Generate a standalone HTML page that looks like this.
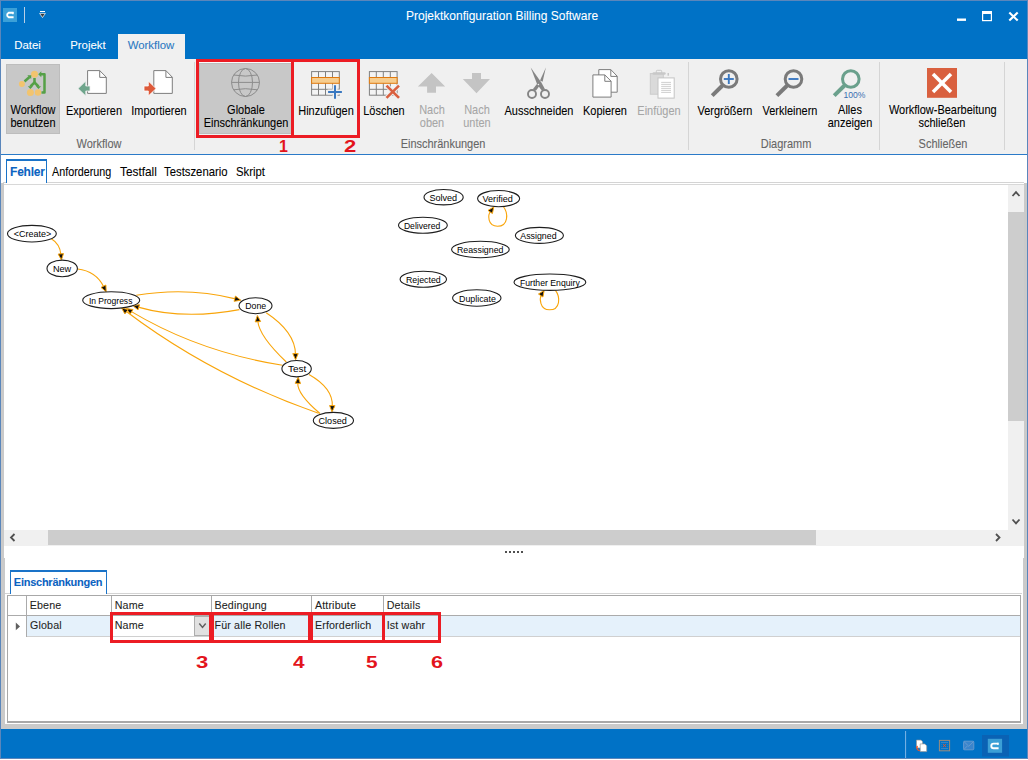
<!DOCTYPE html>
<html><head><meta charset="utf-8">
<style>
*{box-sizing:border-box;margin:0;padding:0}
html,body{width:1028px;height:760px;overflow:hidden;background:#fff;font-family:"Liberation Sans",sans-serif;}
.a{position:absolute}
.t{position:absolute;white-space:nowrap;font-size:11px;color:#000;line-height:12px;-webkit-text-stroke:0.08px currentColor}
.c{text-align:center}
.g{color:#a6a6a6}
.grp{position:absolute;font-size:12.4px;transform:scaleX(0.885);color:#666;-webkit-text-stroke:0.1px currentColor;white-space:nowrap;text-align:center;line-height:12px}
.sep{position:absolute;width:1px;background:#d5d5d5}
.red{position:absolute;border:3px solid #ec1c24}
.num{position:absolute;font-weight:bold;color:#e3141c;font-size:15px;line-height:15px}
</style></head><body>
<div class="a" style="left:0;top:0;width:1028px;height:759px;background:#0072c6;border:1px solid #5a86bb"></div>
<!-- title bar -->
<div class="a" style="left:3px;top:8px;width:14px;height:14px;background:#3ba0d8"></div>
<div class="a" style="left:24px;top:7px;width:1px;height:16px;background:#b9cfe6"></div>

<svg class="a" style="left:0;top:0" width="60" height="30">
<path d="M13.6,12.8 H8.6 A2.4,2.4 0 0 0 8.6,17.2 H13.6" stroke="#fff" stroke-width="1.9" fill="none"/>
<line x1="12.9" y1="12" x2="12.9" y2="14.2" stroke="#fff" stroke-width="1.3"/>
<rect x="40" y="11" width="5" height="1" fill="#fff"/>
<polygon points="39.6,13.4 45.4,13.4 42.5,17.6" fill="#3a3a3a" stroke="#fff" stroke-width="0.7"/>
</svg>
<svg class="a" style="left:950px;top:5px" width="78" height="24">
<rect x="7" y="13.5" width="9" height="2.4" fill="#fff"/>
<rect x="32.6" y="6.6" width="8.8" height="9" fill="none" stroke="#fff" stroke-width="1.2"/>
<rect x="32" y="6" width="10" height="3" fill="#fff"/>
<g stroke="#fff" stroke-width="2.1"><line x1="59.3" y1="7.5" x2="67.7" y2="15.6"/><line x1="67.7" y1="7.5" x2="59.3" y2="15.6"/></g>
</svg>
<div class="t" style="left:406px;top:9px;font-size:12px;color:#fff;line-height:14px">Projektkonfiguration Billing Software</div>
<!-- tabs -->
<div class="t" style="left:14.3px;top:38.5px;font-size:11.4px;color:#fff;line-height:13px">Datei</div>
<div class="t" style="left:70.2px;top:38.5px;font-size:11.4px;color:#fff;line-height:13px">Projekt</div>
<div class="a" style="left:118px;top:34px;width:67px;height:26px;background:#f0f0f0"></div>
<div class="t" style="left:127.7px;top:38.5px;font-size:11.4px;color:#2b79c2;line-height:13px">Workflow</div>
<!-- ribbon -->
<div class="a" style="left:1px;top:59px;width:1026px;height:95px;background:#f0f0f0"></div>
<div class="a" style="left:1px;top:154px;width:1026px;height:1px;background:#2a7ac8"></div>

<!-- ribbon buttons highlight -->
<div class="a" style="left:6px;top:64px;width:54px;height:70px;background:#c8c8c8;border:1px solid #bdbdbd"></div>
<div class="a" style="left:199px;top:63px;width:92px;height:71px;background:#c8c8c8;border:1px solid #bdbdbd;border-right:none"></div>
<div class="a" style="left:199px;top:62px;width:92px;height:1px;background:#fafafa"></div>
<!-- separators -->
<div class="sep" style="left:194px;top:62px;height:88px"></div>
<div class="sep" style="left:688px;top:62px;height:88px"></div>
<div class="sep" style="left:879px;top:62px;height:88px"></div>
<div class="sep" style="left:1004px;top:62px;height:88px"></div>
<!-- labels -->
<div class="t c" style="left:-27px;top:103.7px;width:120px;line-height:13px;font-size:12.4px;transform:scaleX(0.885)">Workflow<br>benutzen</div>
<div class="t c" style="left:34px;top:104.7px;width:120px;line-height:13px;font-size:12.4px;transform:scaleX(0.885)">Exportieren</div>
<div class="t c" style="left:99px;top:104.7px;width:120px;line-height:13px;font-size:12.4px;transform:scaleX(0.885)">Importieren</div>
<div class="grp" style="left:39px;top:137.5px;width:120px">Workflow</div>
<div class="t c" style="left:186px;top:103.7px;width:120px;line-height:13px;font-size:12.4px;transform:scaleX(0.885)">Globale<br>Einschränkungen</div>
<div class="t c" style="left:266px;top:104.7px;width:120px;line-height:13px;font-size:12.4px;transform:scaleX(0.885)">Hinzufügen</div>
<div class="t c" style="left:324px;top:104.7px;width:120px;line-height:13px;font-size:12.4px;transform:scaleX(0.885)">Löschen</div>
<div class="t c g" style="left:372px;top:103.7px;width:120px;line-height:13px;font-size:12.4px;transform:scaleX(0.885)">Nach<br>oben</div>
<div class="t c g" style="left:417px;top:103.7px;width:120px;line-height:13px;font-size:12.4px;transform:scaleX(0.885)">Nach<br>unten</div>
<div class="grp" style="left:383px;top:137.5px;width:120px">Einschränkungen</div>
<div class="t c" style="left:479px;top:104.7px;width:120px;line-height:13px;font-size:12.4px;transform:scaleX(0.885)">Ausschneiden</div>
<div class="t c" style="left:545px;top:104.7px;width:120px;line-height:13px;font-size:12.4px;transform:scaleX(0.885)">Kopieren</div>
<div class="t c g" style="left:599px;top:104.7px;width:120px;line-height:13px;font-size:12.4px;transform:scaleX(0.885)">Einfügen</div>
<div class="t c" style="left:665px;top:104.7px;width:120px;line-height:13px;font-size:12.4px;transform:scaleX(0.885)">Vergrößern</div>
<div class="t c" style="left:730px;top:104.7px;width:120px;line-height:13px;font-size:12.4px;transform:scaleX(0.885)">Verkleinern</div>
<div class="t c" style="left:790px;top:103.7px;width:120px;line-height:13px;font-size:12.4px;transform:scaleX(0.885)">Alles<br>anzeigen</div>
<div class="grp" style="left:726px;top:137.5px;width:120px">Diagramm</div>
<div class="t c" style="left:882px;top:103.7px;width:120px;line-height:13px;font-size:12.4px;transform:scaleX(0.885)">Workflow-Bearbeitung<br>schließen</div>
<div class="grp" style="left:883px;top:137.5px;width:120px">Schließen</div>

<svg class="a" style="left:0;top:0" width="1028" height="160" viewBox="0 0 1028 160">
<!-- workflow benutzen -->
<g fill="#f2c46e"><circle cx="34.5" cy="74.3" r="3.5"/><circle cx="21.9" cy="84" r="3"/><circle cx="30.4" cy="92.5" r="3.5"/><circle cx="38" cy="92.5" r="3.2"/></g>
<g stroke="#55a047" stroke-width="2.5" fill="none" stroke-linejoin="round">
<line x1="24.5" y1="81.5" x2="29.5" y2="77"/>
<line x1="34.5" y1="78" x2="34.5" y2="83"/>
<polyline points="30.4,86.5 34.5,82.5 38.5,86.5"/>
<polyline points="41,74.3 44.5,74.3 44.5,92.5 41.5,92.5"/>
</g>
<g fill="#55a047">
<polygon points="27.3,75.3 31.3,75.2 31.2,79"/>
<polygon points="27.8,86.2 33,86.2 30.4,89"/>
<polygon points="35.9,86.2 41.1,86.2 38.5,89"/>
<polygon points="38.2,74.3 41.3,71.3 41.3,77.3"/>
</g>
<!-- export -->
<g stroke="#7d7d7d" stroke-width="1" fill="#fff">
<path d="M87.6,70.6 H99.7 L106.3,77.2 V93.4 H87.6 Z"/>
<path d="M99.7,70.6 V77.4 H106.3" fill="none"/>
<path d="M153.8,70.6 H165.9 L172.3,77.2 V93.4 H153.8 Z"/>
<path d="M165.9,70.6 V77.4 H172.3" fill="none"/>
</g>
<polygon points="78,88.6 85.8,81 85.8,86 90,86 90,91 85.8,91 85.8,96" fill="#6fa58c" stroke="#f0f0f0" stroke-width="0.8"/>
<polygon points="156.1,88.6 148.3,81 148.3,86 144,86 144,91 148.3,91 148.3,96" fill="#dd5a3a" stroke="#fff" stroke-width="0.8"/>
<!-- globe -->
<g stroke="#8c8c8c" stroke-width="1" fill="none">
<circle cx="245.5" cy="82.5" r="14"/>
<ellipse cx="245.5" cy="82.5" rx="7" ry="14"/>
<line x1="231.5" y1="82.4" x2="259.5" y2="82.4"/>
<path d="M233.5,75 Q245.5,77.2 257.5,75"/>
<path d="M233.5,89.8 Q245.5,87.6 257.5,89.8"/>
</g>
<!-- table add -->
<g stroke="#808080" stroke-width="1" fill="#f4f4f4">
<rect x="311.6" y="71.6" width="27.7" height="23.6"/>
<line x1="318.5" y1="71.6" x2="318.5" y2="95.2"/><line x1="325.5" y1="71.6" x2="325.5" y2="95.2"/><line x1="332.5" y1="71.6" x2="332.5" y2="95.2"/>
<line x1="311.6" y1="89.3" x2="339.3" y2="89.3"/>
</g>
<rect x="311.6" y="77.5" width="27.7" height="5.8" fill="#f6cd8f" stroke="#e07a10" stroke-width="1"/>
<g stroke="#f0f0f0" stroke-width="5"><line x1="335" y1="84.5" x2="335" y2="99.5"/><line x1="327.5" y1="92" x2="342.5" y2="92"/></g>
<g stroke="#3a78c0" stroke-width="2"><line x1="335" y1="85.3" x2="335" y2="98.8"/><line x1="328.1" y1="92" x2="341.9" y2="92"/></g>
<!-- table delete -->
<g stroke="#808080" stroke-width="1" fill="#f4f4f4">
<rect x="369.4" y="71.6" width="27.7" height="23.6"/>
<line x1="376.3" y1="71.6" x2="376.3" y2="95.2"/><line x1="383.3" y1="71.6" x2="383.3" y2="95.2"/><line x1="390.3" y1="71.6" x2="390.3" y2="95.2"/>
<line x1="369.4" y1="89.3" x2="397.1" y2="89.3"/>
</g>
<rect x="369.4" y="77.5" width="27.7" height="5.8" fill="#f6cd8f" stroke="#e07a10" stroke-width="1"/>
<g stroke="#f0f0f0" stroke-width="4.5"><line x1="386.5" y1="85.6" x2="399" y2="97.9"/><line x1="399" y1="85.6" x2="386.5" y2="97.9"/></g>
<g stroke="#d9603f" stroke-width="2.6"><line x1="386.5" y1="85.6" x2="399" y2="97.9"/><line x1="399" y1="85.6" x2="386.5" y2="97.9"/></g>
<!-- up/down -->
<polygon points="431.6,73 445.1,86.5 436,86.5 436,92.8 427.1,92.8 427.1,86.5 417.9,86.5" fill="#c4c4c4"/>
<polygon points="476.5,93.2 490,78.9 481,78.9 481,73 472,73 472,78.9 462.8,78.9" fill="#c4c4c4"/>
<!-- scissors -->
<g fill="#858585">
<polygon points="530.7,67.6 541.5,82.8 545,89.2 541.8,90.6 537.2,84.6"/>
<polygon points="545.9,67.6 542.6,81.7 540,80.5"/>
<polygon points="539.2,86.3 535.9,90.8 532.8,89.2 537.3,83.6"/>
</g>
<circle cx="538.4" cy="84.5" r="0.8" fill="#f0f0f0"/>
<g stroke="#858585" stroke-width="1.9" fill="none"><circle cx="532" cy="94" r="4"/><circle cx="545" cy="94" r="4"/></g>
<!-- copy -->
<g stroke="#7d7d7d" stroke-width="1" fill="#fff">
<path d="M598.8,69.6 H610.8 L617.2,76.2 V92.2 H598.8 Z"/>
<path d="M610.8,69.6 V76.4 H617.2" fill="none"/>
<path d="M592.9,74.9 H604.8 L611.1,81.2 V97.1 H592.9 Z"/>
<path d="M604.8,74.9 V81.3 H611.1" fill="none"/>
</g>
<!-- paste -->
<rect x="650.3" y="73.6" width="13" height="20.6" fill="#dadada" stroke="#cbcbcb" stroke-width="1"/>
<rect x="652.5" y="72.3" width="13.2" height="2.4" rx="1.2" fill="#c8c8c8"/>
<rect x="656.3" y="70.3" width="5.4" height="3" rx="1" fill="none" stroke="#c8c8c8" stroke-width="1"/>
<rect x="667.5" y="73" width="1.5" height="2.7" fill="#c8c8c8"/>
<rect x="658" y="77.9" width="16.2" height="20.2" fill="#fff" stroke="#c4c4c4" stroke-width="1"/>
<g stroke="#c8c8c8" stroke-width="0.9"><line x1="661.2" y1="82.4" x2="671" y2="82.4"/><line x1="661.2" y1="84.4" x2="671" y2="84.4"/><line x1="661.2" y1="86.4" x2="671" y2="86.4"/><line x1="661.2" y1="88.4" x2="671" y2="88.4"/><line x1="661.2" y1="90.4" x2="671" y2="90.4"/><line x1="661.2" y1="92.4" x2="671" y2="92.4"/></g>
<!-- zoom in -->
<g stroke="#7a7a7a" fill="none"><circle cx="728.8" cy="79" r="8.3" stroke-width="3"/><line x1="722.5" y1="85.5" x2="712.2" y2="95.6" stroke-width="4"/></g>
<g stroke="#3a78c0" stroke-width="1.9"><line x1="728.8" y1="74" x2="728.8" y2="84"/><line x1="723.8" y1="79" x2="733.8" y2="79"/></g>
<!-- zoom out -->
<g stroke="#7a7a7a" fill="none"><circle cx="793.5" cy="79" r="8.3" stroke-width="3"/><line x1="787.2" y1="85.5" x2="776.9" y2="95.6" stroke-width="4"/></g>
<line x1="788.5" y1="79" x2="798.5" y2="79" stroke="#3a78c0" stroke-width="1.9"/>
<!-- fit -->
<g stroke="#6aa08c" fill="none"><circle cx="850.8" cy="79" r="8.3" stroke-width="3"/><line x1="844.5" y1="85.5" x2="834.2" y2="95.6" stroke-width="4"/></g>
<text x="854.5" y="97.5" font-family="Liberation Sans" font-size="8.6" fill="#3a6fb0" text-anchor="middle">100%</text>
<!-- close -->
<rect x="927" y="68" width="30" height="29.8" fill="#d9603f"/>
<g stroke="#fff" stroke-width="3.6"><line x1="933" y1="74" x2="951" y2="92"/><line x1="951" y1="74" x2="933" y2="92"/></g>
</svg>
<!-- red boxes -->
<div class="red" style="left:196px;top:59px;width:98px;height:79px"></div>
<div class="red" style="left:291px;top:59px;width:69px;height:79px"></div>
<div class="num" style="left:279px;top:139px;font-size:16px;line-height:16px">1</div>
<div class="num" style="left:344px;top:139px;font-size:16px;line-height:16px;transform:scaleX(1.38);transform-origin:0 0">2</div>
<!-- doc area -->
<div class="a" style="left:1px;top:155px;width:1026px;height:574px;background:#fff"></div>
<!-- frame strips -->
<div class="a" style="left:1px;top:183px;width:3px;height:375px;background:#cacaca"></div><div class="a" style="left:1px;top:558px;width:4px;height:171px;background:#cacaca"></div>
<div class="a" style="left:1023px;top:558px;width:4px;height:171px;background:#cacaca"></div><div class="a" style="left:1024px;top:183px;width:3px;height:376px;background:#cacaca"></div>
<div class="a" style="left:1px;top:724px;width:1026px;height:5px;background:#cacaca"></div>
<!-- doc tabs -->
<div class="a" style="left:3px;top:182px;width:1021px;height:1px;background:#d4d4d4"></div>
<div class="a" style="left:4px;top:184px;width:1020px;height:1px;background:#d8d8d8"></div>
<div class="a" style="left:6px;top:159px;width:41px;height:24px;background:#fff;border:1px solid #1a73c8;border-top:2px solid #1a73c8;border-bottom:none"></div>
<div class="t" style="left:10px;top:165px;font-size:12px;font-weight:bold;letter-spacing:-0.2px;color:#0b63c1;line-height:14px">Fehler</div>
<div class="t" style="left:52.4px;top:164.6px;font-size:12.2px;line-height:14px;color:#000;transform:scaleX(0.884);transform-origin:0 0">Anforderung</div>
<div class="t" style="left:120.4px;top:164.6px;font-size:12.2px;line-height:14px;color:#000;transform:scaleX(0.97);transform-origin:0 0">Testfall</div>
<div class="t" style="left:164.2px;top:164.6px;font-size:12.2px;line-height:14px;color:#000;transform:scaleX(0.93);transform-origin:0 0">Testszenario</div>
<div class="t" style="left:236px;top:164.6px;font-size:12.2px;line-height:14px;color:#000;transform:scaleX(0.93);transform-origin:0 0">Skript</div>
<!-- GRAPH -->
<svg class="a" style="left:0;top:0" width="1028" height="530" viewBox="0 0 1028 530">
<g fill="none" stroke="#f9a50a" stroke-width="1.1">
<path d="M51.0,238.5 Q60,244 60.9,254.5"/>
<path d="M77.6,269 Q96,271 103.8,286.9"/>
<path d="M136.3,295.3 Q187.6,286.8 235.5,298.9"/>
<path d="M239.4,309.6 Q183.3,320.1 138.1,307.1"/>
<path d="M266.2,312.7 Q295.2,331.9 295.5,354.3"/>
<path d="M286.3,362 Q259,336 257.8,321.0"/>
<path d="M309,374.6 Q333.2,388.4 332.3,406.3"/>
<path d="M320,413.5 Q297,394 297.8,382.7"/>
<path d="M282.5,365.3 Q199,352 131.0,311.4"/>
<path d="M318.5,413.3 Q212.2,376.4 126.0,311.3"/>
<path d="M503.3,206.5 C508.5,213 508.5,226.2 497.5,226.2 C487.5,226.2 487.5,215 490.8,211.2"/>
<path d="M555.3,290.2 C560.5,297 560.5,309.8 549.5,309.8 C539.5,309.8 539.5,298.5 541.3,294.5"/>
</g>
<polygon points="61.4,260.0 58.2,254.1 63.5,253.6" fill="#111" stroke="#f9a50a" stroke-width="1" stroke-linejoin="miter"/>
<polygon points="106.2,291.8 101.0,287.4 105.9,285.0" fill="#111" stroke="#f9a50a" stroke-width="1" stroke-linejoin="miter"/>
<polygon points="240.8,300.2 234.1,301.3 235.4,296.1" fill="#111" stroke="#f9a50a" stroke-width="1" stroke-linejoin="miter"/>
<polygon points="132.8,305.6 139.5,304.7 138.0,309.9" fill="#111" stroke="#f9a50a" stroke-width="1" stroke-linejoin="miter"/>
<polygon points="295.6,359.8 292.8,353.6 298.2,353.6" fill="#111" stroke="#f9a50a" stroke-width="1" stroke-linejoin="miter"/>
<polygon points="257.4,315.5 260.6,321.5 255.2,321.9" fill="#111" stroke="#f9a50a" stroke-width="1" stroke-linejoin="miter"/>
<polygon points="332.0,411.8 329.6,405.5 335.0,405.7" fill="#111" stroke="#f9a50a" stroke-width="1" stroke-linejoin="miter"/>
<polygon points="298.2,377.2 300.5,383.6 295.1,383.2" fill="#111" stroke="#f9a50a" stroke-width="1" stroke-linejoin="miter"/>
<polygon points="126.3,308.6 133.0,309.5 130.2,314.1" fill="#111" stroke="#f9a50a" stroke-width="1" stroke-linejoin="miter"/>
<polygon points="121.6,308.0 128.2,309.6 124.9,313.9" fill="#111" stroke="#f9a50a" stroke-width="1" stroke-linejoin="miter"/>
<polygon points="493.8,206.9 492.4,213.5 488.0,210.4" fill="#111" stroke="#f9a50a" stroke-width="1" stroke-linejoin="miter"/>
<polygon points="544.2,290.4 542.9,297.0 538.5,294.0" fill="#111" stroke="#f9a50a" stroke-width="1" stroke-linejoin="miter"/>
<g fill="#fff" stroke="#1e1e1e" stroke-width="1.1">
<ellipse cx="31.9" cy="233.7" rx="24.4" ry="8.3"/>
<ellipse cx="62.2" cy="268.4" rx="15.2" ry="8.3"/>
<ellipse cx="111.2" cy="300.2" rx="28.5" ry="8.4"/>
<ellipse cx="255.5" cy="305.7" rx="16.5" ry="8.0"/>
<ellipse cx="296.6" cy="368.7" rx="14.7" ry="8.2"/>
<ellipse cx="333.4" cy="420.4" rx="20.1" ry="8.0"/>
<ellipse cx="443.6" cy="197.2" rx="19.6" ry="7.7"/>
<ellipse cx="498.6" cy="198.6" rx="21.0" ry="8.1"/>
<ellipse cx="422.9" cy="225.2" rx="24.4" ry="8.0"/>
<ellipse cx="539.4" cy="235.4" rx="24.0" ry="8.0"/>
<ellipse cx="480.4" cy="249.5" rx="28.8" ry="8.2"/>
<ellipse cx="423.3" cy="279.2" rx="23.2" ry="8.0"/>
<ellipse cx="549.9" cy="282.2" rx="35.9" ry="8.2"/>
<ellipse cx="476.8" cy="298.0" rx="24.2" ry="8.2"/>
</g>
<g font-family="Liberation Sans" font-size="9.8" fill="#000">
<text x="13.8" y="237.2" textLength="37.4" lengthAdjust="spacingAndGlyphs">&lt;Create&gt;</text>
<text x="52.9" y="271.9" textLength="18.3" lengthAdjust="spacingAndGlyphs">New</text>
<text x="88.9" y="303.7" textLength="43.5" lengthAdjust="spacingAndGlyphs">In Progress</text>
<text x="245.2" y="309.2" textLength="21.0" lengthAdjust="spacingAndGlyphs">Done</text>
<text x="287.9" y="372.2" textLength="18.3" lengthAdjust="spacingAndGlyphs">Test</text>
<text x="318.5" y="423.9" textLength="28.3" lengthAdjust="spacingAndGlyphs">Closed</text>
<text x="429.4" y="200.7" textLength="27.8" lengthAdjust="spacingAndGlyphs">Solved</text>
<text x="482.5" y="202.1" textLength="30.3" lengthAdjust="spacingAndGlyphs">Verified</text>
<text x="403.9" y="228.7" textLength="36.3" lengthAdjust="spacingAndGlyphs">Delivered</text>
<text x="520.3" y="238.9" textLength="36.3" lengthAdjust="spacingAndGlyphs">Assigned</text>
<text x="456.9" y="253.0" textLength="46.6" lengthAdjust="spacingAndGlyphs">Reassigned</text>
<text x="405.9" y="282.7" textLength="34.9" lengthAdjust="spacingAndGlyphs">Rejected</text>
<text x="519.9" y="285.7" textLength="59.9" lengthAdjust="spacingAndGlyphs">Further Enquiry</text>
<text x="459.0" y="301.5" textLength="36.9" lengthAdjust="spacingAndGlyphs">Duplicate</text>
</g></svg>
<!-- /GRAPH -->
<!-- scrollbars -->
<div class="a" style="left:1008px;top:185px;width:16px;height:345px;background:#f0f0f0"></div>
<div class="a" style="left:1008px;top:212px;width:16px;height:209px;background:#cdcdcd"></div>
<div class="a" style="left:4px;top:530px;width:1020px;height:16px;background:#f0f0f0"></div>
<div class="a" style="left:48px;top:530px;width:768px;height:15px;background:#cdcdcd"></div>
<svg class="a" style="left:0;top:180px" width="1028" height="380">
<g stroke="#505050" stroke-width="1.8" fill="none">
<polyline points="1012.5,16 1016,12.2 1019.5,16"/>
<polyline points="1012.5,339.5 1016,343.3 1019.5,339.5"/>
<polyline points="14.5,354 11,357.5 14.5,361"/>
<polyline points="996,354 999.5,357.5 996,361"/>
</g>
<g fill="#505050"><rect x="505" y="371" width="2" height="2"/><rect x="509" y="371" width="2" height="2"/><rect x="513" y="371" width="2" height="2"/><rect x="517" y="371" width="2" height="2"/><rect x="521" y="371" width="2" height="2"/></g>
</svg>
<!-- bottom panel -->
<div class="a" style="left:5px;top:593px;width:1017px;height:1px;background:#d4d4d4"></div>
<div class="a" style="left:10px;top:570px;width:97px;height:24px;background:#fff;border:1px solid #1a73c8;border-top:2px solid #1a73c8;border-bottom:none"></div>
<div class="t" style="left:13.8px;top:575px;font-size:11px;font-weight:bold;letter-spacing:-0.25px;color:#0b63c1;line-height:14px">Einschränkungen</div>
<!-- grid -->
<div class="a" style="left:7px;top:595px;width:1014px;height:128px;background:#fff;border:1px solid #a8a8a8;border-width:1px 1px 2px 1px"></div>
<div class="a" style="left:26px;top:616px;width:994px;height:20px;background:#e5f1fb"></div>
<div class="a" style="left:8px;top:615px;width:1012px;height:1px;background:#ababab"></div>
<div class="a" style="left:26px;top:636px;width:994px;height:1px;background:#d0d0d0"></div>
<div class="a" style="left:26px;top:596px;width:1px;height:41px;background:#ababab"></div>
<div class="a" style="left:111px;top:596px;width:1px;height:20px;background:#ababab"></div>
<div class="a" style="left:211px;top:596px;width:1px;height:20px;background:#ababab"></div>
<div class="a" style="left:311px;top:596px;width:1px;height:20px;background:#ababab"></div>
<div class="a" style="left:383px;top:596px;width:1px;height:20px;background:#ababab"></div>
<div class="a" style="left:112px;top:616px;width:99px;height:20px;background:#fff"></div>
<div class="a" style="left:194px;top:616px;width:16px;height:20px;background:#e1e1e1;border:1px solid #adadad"></div>
<svg class="a" style="left:0;top:600px" width="220" height="40">
<polygon points="15.8,22.6 20,26.4 15.8,30.2" fill="#606060"/>
<polyline points="199.3,23.6 202.5,27.4 205.7,23.6" stroke="#606060" stroke-width="1.5" fill="none"/>
</svg>
<div class="t" style="left:29.7px;top:599px;font-size:10.7px;letter-spacing:0.15px;color:#1e1e1e;line-height:13px">Ebene</div>
<div class="t" style="left:114.7px;top:599px;font-size:10.7px;letter-spacing:0.15px;color:#1e1e1e;line-height:13px">Name</div>
<div class="t" style="left:214.5px;top:599px;font-size:10.7px;letter-spacing:0.15px;color:#1e1e1e;line-height:13px">Bedingung</div>
<div class="t" style="left:314.9px;top:599px;font-size:10.7px;letter-spacing:0.15px;color:#1e1e1e;line-height:13px">Attribute</div>
<div class="t" style="left:386.7px;top:599px;font-size:10.7px;letter-spacing:0.15px;color:#1e1e1e;line-height:13px">Details</div>
<div class="t" style="left:30px;top:619px;font-size:10.7px;letter-spacing:0.15px;color:#1e1e1e;line-height:13px">Global</div>
<div class="t" style="left:114.7px;top:619px;font-size:10.7px;letter-spacing:0.15px;color:#1e1e1e;line-height:13px">Name</div>
<div class="t" style="left:214.5px;top:619px;font-size:10.7px;letter-spacing:0.15px;color:#1e1e1e;line-height:13px">Für alle Rollen</div>
<div class="t" style="left:314.9px;top:619px;font-size:10.7px;letter-spacing:0.15px;color:#1e1e1e;line-height:13px">Erforderlich</div>
<div class="t" style="left:386.7px;top:619px;font-size:10.7px;letter-spacing:0.15px;color:#1e1e1e;line-height:13px">Ist wahr</div>
<div class="red" style="left:110px;top:612px;width:102px;height:31px"></div>
<div class="red" style="left:211px;top:612px;width:100px;height:31px"></div>
<div class="red" style="left:310px;top:612px;width:75px;height:31px"></div>
<div class="red" style="left:382px;top:612px;width:59px;height:31px"></div>
<div class="num" style="left:196.3px;top:654.8px;font-size:16px;line-height:16px;transform:scaleX(1.38);transform-origin:0 0">3</div>
<div class="num" style="left:292.5px;top:654.8px;font-size:16px;line-height:16px;transform:scaleX(1.3);transform-origin:0 0">4</div>
<div class="num" style="left:365.5px;top:654.8px;font-size:16px;line-height:16px;transform:scaleX(1.3);transform-origin:0 0">5</div>
<div class="num" style="left:431.3px;top:654.8px;font-size:16px;line-height:16px;transform:scaleX(1.35);transform-origin:0 0">6</div>
<!-- status bar -->
<svg class="a" style="left:900px;top:726px" width="128" height="34">
<line x1="5.6" y1="5" x2="5.6" y2="32" stroke="#7fb6e6" stroke-width="1"/>
<path d="M16.5,14.1 H21 L22.6,15.7 V22 H16.5 Z" fill="#fff" stroke="#9a9a9a" stroke-width="0.7"/>
<path d="M20.2,17.9 H24.8 L26.7,19.8 V25.6 H20.2 Z" fill="#fff" stroke="#9a9a9a" stroke-width="0.7"/>
<path d="M16.8,20.5 Q16.3,23.8 19.8,24.8" stroke="#e8542a" stroke-width="1.1" fill="none"/>
<polygon points="16,21.5 17.2,19.6 18.3,21.6" fill="#e8542a"/>
<rect x="39.4" y="14.4" width="10.2" height="10.4" fill="none" stroke="#9c8c7c" stroke-width="1"/>
<g stroke="#5a8fc8" stroke-width="0.6"><line x1="41" y1="16.5" x2="48" y2="16.5"/><line x1="41" y1="22.5" x2="48" y2="22.5"/></g>
<g fill="#5a8fc8"><rect x="41" y="18.3" width="0.6" height="0.6"/><rect x="41" y="20.3" width="0.6" height="0.6"/><rect x="47.4" y="18.3" width="0.6" height="0.6"/><rect x="47.4" y="20.3" width="0.6" height="0.6"/></g>
<g stroke="#e8542a" stroke-width="0.9"><line x1="43" y1="18" x2="46" y2="21"/><line x1="46" y1="18" x2="43" y2="21"/></g>
<rect x="63.6" y="15.2" width="10.2" height="8.6" rx="1" fill="#3a85cc" stroke="#6a9ccf" stroke-width="0.9"/>
<polyline points="63.8,15.4 68.7,20.2 73.6,15.4" stroke="#6a9ccf" stroke-width="0.9" fill="none"/>
<polyline points="63.8,23.6 67.3,20 M70.1,20 73.6,23.6" stroke="#6a9ccf" stroke-width="0.9" fill="none"/>
<rect x="82" y="9" width="27" height="21.5" fill="#0a62b4"/>
<rect x="87.8" y="12.8" width="14.3" height="14" fill="#3b9fd6"/>
<path d="M98.6,17.6 H93.6 A2.3,2.3 0 0 0 93.6,22.2 H98.6" stroke="#fff" stroke-width="1.9" fill="none"/>
<line x1="97.9" y1="16.8" x2="97.9" y2="19" stroke="#fff" stroke-width="1.3"/>
</svg>

</body></html>
